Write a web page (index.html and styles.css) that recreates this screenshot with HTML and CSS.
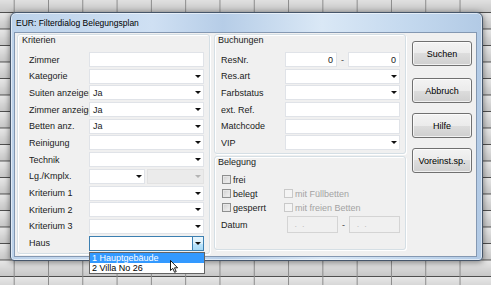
FILE: index.html
```html
<!DOCTYPE html>
<html lang="de">
<head>
  <meta charset="UTF-8" />
  <title>Filterdialog Belegungsplan</title>
  <link rel="stylesheet" href="styles.css">
</head>
<body>
  <div class="fenster">
    <div class="titel">EUR: Filterdialog Belegungsplan</div>
    <div class="inhalt">

      <!-- Kriterien -->
      <div class="gruppe kriterien">
        <div class="gruppe-titel">Kriterien</div>
        <div class="zeilen">
          <div class="zeile"><span class="beschriftung">Zimmer</span><div class="feld"></div></div>
          <div class="zeile"><span class="beschriftung">Kategorie</span><div class="feld"><span></span><i class="pfeil"></i></div></div>
          <div class="zeile"><span class="beschriftung">Suiten anzeigen</span><div class="feld"><span>Ja</span><i class="pfeil"></i></div></div>
          <div class="zeile"><span class="beschriftung">Zimmer anzeigen</span><div class="feld"><span>Ja</span><i class="pfeil"></i></div></div>
          <div class="zeile"><span class="beschriftung">Betten anz.</span><div class="feld"><span>Ja</span><i class="pfeil"></i></div></div>
          <div class="zeile"><span class="beschriftung">Reinigung</span><div class="feld"><span></span><i class="pfeil"></i></div></div>
          <div class="zeile"><span class="beschriftung">Technik</span><div class="feld"><span></span><i class="pfeil"></i></div></div>
          <div class="zeile">
            <span class="beschriftung">Lg./Kmplx.</span>
            <div class="feld halb"><span></span><i class="pfeil"></i></div>
            <div class="feld halb gesperrt"><span></span><i class="pfeil"></i></div>
          </div>
          <div class="zeile"><span class="beschriftung">Kriterium 1</span><div class="feld"><span></span><i class="pfeil"></i></div></div>
          <div class="zeile"><span class="beschriftung">Kriterium 2</span><div class="feld"><span></span><i class="pfeil"></i></div></div>
          <div class="zeile"><span class="beschriftung">Kriterium 3</span><div class="feld"><span></span><i class="pfeil"></i></div></div>
          <div class="zeile">
            <span class="beschriftung">Haus</span>
            <div class="feld offen">
              <span></span>
              <b class="knopf"><i class="pfeil"></i></b>
              <ul class="liste">
                <li class="aktiv">1 Hauptgebäude</li>
                <li>2 Villa No 26</li>
              </ul>
              <svg class="zeiger" width="9" height="13" viewBox="0 0 9 13">
                <path d="M0.5 0.5 V10.5 L2.8 8.4 L4.6 12.3 L6.2 11.6 L4.5 7.8 H7.6 Z" fill="#fff" stroke="#000" stroke-width="0.9" stroke-linejoin="round"/>
              </svg>
            </div>
          </div>
        </div>
      </div>

      <div class="mitte">
        <!-- Buchungen -->
        <div class="gruppe buchungen">
          <div class="gruppe-titel">Buchungen</div>
          <div class="zeilen">
            <div class="zeile">
              <span class="beschriftung">ResNr.</span>
              <div class="feld zahl">0</div>
              <span class="strich">-</span>
              <div class="feld zahl">0</div>
            </div>
            <div class="zeile"><span class="beschriftung">Res.art</span><div class="feld"><span></span><i class="pfeil"></i></div></div>
            <div class="zeile"><span class="beschriftung">Farbstatus</span><div class="feld"><span></span><i class="pfeil"></i></div></div>
            <div class="zeile"><span class="beschriftung">ext. Ref.</span><div class="feld"></div></div>
            <div class="zeile"><span class="beschriftung">Matchcode</span><div class="feld"></div></div>
            <div class="zeile"><span class="beschriftung">VIP</span><div class="feld"><span></span><i class="pfeil"></i></div></div>
          </div>
        </div>

        <!-- Belegung -->
        <div class="gruppe belegung">
          <div class="gruppe-titel">Belegung</div>
          <div class="belegung-inhalt">
            <div class="kasten-zeile">
              <label class="kasten"><i class="haken"></i>frei</label>
            </div>
            <div class="kasten-zeile">
              <label class="kasten"><i class="haken"></i>belegt</label>
              <label class="kasten aus"><i class="haken"></i>mit Füllbetten</label>
            </div>
            <div class="kasten-zeile">
              <label class="kasten"><i class="haken"></i>gesperrt</label>
              <label class="kasten aus"><i class="haken"></i>mit freien Betten</label>
            </div>
            <div class="datum-zeile">
              <span class="beschriftung">Datum</span>
              <div class="datum">&nbsp;.&nbsp;&nbsp;.</div>
              <span class="strich">-</span>
              <div class="datum">&nbsp;.&nbsp;&nbsp;.</div>
            </div>
          </div>
        </div>
      </div>

      <div class="knoepfe">
        <button class="erster">Suchen</button>
        <button>Abbruch</button>
        <button>Hilfe</button>
        <button>Voreinst.sp.</button>
      </div>

    </div>
  </div>
</body>
</html>
```

FILE: styles.css
```css
* {
  box-sizing: border-box;
}

html, body {
  margin: 0;
}

body {
  width: 491px;
  height: 285px;
  overflow: hidden;
  padding: 12px 0 0 10px;
  font-family: "Liberation Sans", Arial, sans-serif;
  font-size: 9px;
  color: #1a1a1a;
  background-color: #d2d2d2;
  background-image:
    linear-gradient(to right, #8a8a8a 1px, transparent 1px),
    linear-gradient(#4d4d4d 1px, transparent 1px),
    linear-gradient(#e8e8e8, #c6c6c6);
  background-size: 34.3px 100%, 100% 16.5px, 100% 16.5px;
  background-position: 13.7px 0, 0 12px, 0 12.5px;
}

/* Fensterrahmen */
.fenster {
  width: 473px;
  height: 249px;
  border: 1px solid #46566a;
  border-radius: 6px 6px 4px 4px;
  padding: 0 5px 3px 3px;
  display: flex;
  flex-direction: column;
  background: linear-gradient(to right, #bcd2ea, #cfe0f3 30%, #b6cde7 45%, #dae8f6 66%, #c3d8ee 85%, #b2cae5);
  box-shadow: 0 1px 6px rgba(0, 0, 0, 0.5), inset 0 0 0 1px rgba(255, 255, 255, 0.55);
}

.titel {
  height: 19px;
  line-height: 19px;
  padding: 1px 0 0 2px;
  font-size: 8.5px;
  color: #000;
}

.inhalt {
  flex: 1;
  display: flex;
  align-items: flex-start;
  padding: 1px 4px 2px 2px;
  background: #f0f0f0;
  border: 1px solid #8498b2;
}

/* Gruppen */
.gruppe {
  border: 1px solid #d5dfe5;
  border-radius: 3px;
  box-shadow: inset 1px 1px 0 #fff, 1px 1px 0 #fff;
}

.gruppe-titel {
  line-height: 10px;
  height: 10px;
}

.kriterien {
  width: 193px;
  height: 220px;
  padding: 0 5px 0 4px;
}

.kriterien .zeilen {
  margin: 7px 0 0 7px;
}

.mitte {
  width: 192px;
  margin-left: 4px;
  display: flex;
  flex-direction: column;
  gap: 2px;
}

.buchungen {
  height: 120px;
  padding: 0 5px 0 3px;
}

.buchungen .zeilen {
  margin: 7px 0 0 3px;
}

.buchungen .beschriftung {
  width: 64px;
}

.zeilen {
  display: flex;
  flex-direction: column;
  gap: 1.7px;
}

.zeile {
  display: flex;
  align-items: center;
  height: 15px;
}

.beschriftung {
  width: 60px;
  flex-shrink: 0;
  white-space: nowrap;
  overflow: hidden;
}

/* Eingabefelder */
.feld {
  position: relative;
  width: 115px;
  height: 15px;
  display: flex;
  align-items: center;
  justify-content: space-between;
  padding: 0 2px 0 3px;
  background: #fff;
  border: 1px solid #e0e3e8;
}

.feld.halb {
  width: 56px;
}

.feld.halb + .feld.halb {
  width: 57px;
  margin-left: 2px;
}

.feld.gesperrt {
  background: #ebebeb;
  border-color: #e2e2e2;
}

.feld.gesperrt .pfeil {
  border-top-color: #b4b4b4;
}

.pfeil {
  width: 0;
  height: 0;
  border-left: 3px solid transparent;
  border-right: 3px solid transparent;
  border-top: 3px solid #111;
}

.feld.zahl {
  width: 52px;
  justify-content: flex-end;
  padding-right: 3px;
}

.strich {
  width: 11px;
  text-align: center;
  color: #444;
}

/* geoeffnete Auswahl */
.feld.offen {
  border-color: #3c7fb1;
  padding-right: 0;
}

.knopf {
  width: 11px;
  height: 100%;
  display: flex;
  align-items: center;
  justify-content: center;
  border-left: 1px solid #3c7fb1;
  background: linear-gradient(#eaf6fd, #d9f0fc 50%, #bee6fd 50%, #a7d9f5);
}

.liste {
  position: absolute;
  top: 15px;
  left: -1px;
  width: 116px;
  margin: 0;
  padding: 0;
  list-style: none;
  background: #fff;
  border: 1px solid #646464;
  z-index: 2;
}

.liste li {
  height: 10px;
  line-height: 10px;
  padding-left: 2px;
  color: #000;
}

.liste li.aktiv {
  background: #3399ff;
  color: #fff;
}

.zeiger {
  position: absolute;
  left: 80px;
  top: 23px;
  z-index: 3;
}

/* Belegung */
.belegung {
  height: 94px;
  padding: 0 5px 0 3px;
}

.belegung-inhalt {
  margin-top: 8px;
}

.kasten-zeile {
  display: flex;
  height: 14px;
  margin-left: 4px;
}

.kasten {
  display: flex;
  align-items: flex-start;
  gap: 2px;
  width: 62px;
  line-height: 10px;
}

.kasten.aus {
  width: auto;
  color: #a3a3a3;
}

.haken {
  width: 9px;
  height: 9px;
  border: 1px solid #8e8f8f;
  background: linear-gradient(135deg, #cfcfcf, #f4f4f4);
  box-shadow: inset 0 0 0 1px #e6e6e6;
}

.kasten.aus .haken {
  border-color: #c9c9c9;
  background: #f4f4f4;
  box-shadow: none;
}

.datum-zeile {
  display: flex;
  align-items: center;
  height: 17px;
  margin: -1px 0 0 3px;
}

.datum-zeile .beschriftung {
  width: 66px;
}

.datum {
  width: 52px;
  height: 17px;
  line-height: 15px;
  padding-left: 4px;
  border: 1px solid #d4d4d4;
  color: #c0c0c0;
}

.datum-zeile .strich {
  width: 12px;
}

/* Knoepfe */
.knoepfe {
  width: 60px;
  margin: 7px 0 0 6px;
  display: flex;
  flex-direction: column;
  gap: 10px;
}

button {
  width: 60px;
  height: 25px;
  padding: 0;
  font-family: "Liberation Sans", Arial, sans-serif;
  font-size: 9px;
  color: #000;
  border: 1px solid #707070;
  border-radius: 3px;
  background: linear-gradient(#f3f3f3, #ebebeb 50%, #dddddd 50%, #cfcfcf);
  box-shadow: inset 0 0 0 1px rgba(255, 255, 255, 0.7);
}

button.erster {
  margin-bottom: 2px;
}
```
